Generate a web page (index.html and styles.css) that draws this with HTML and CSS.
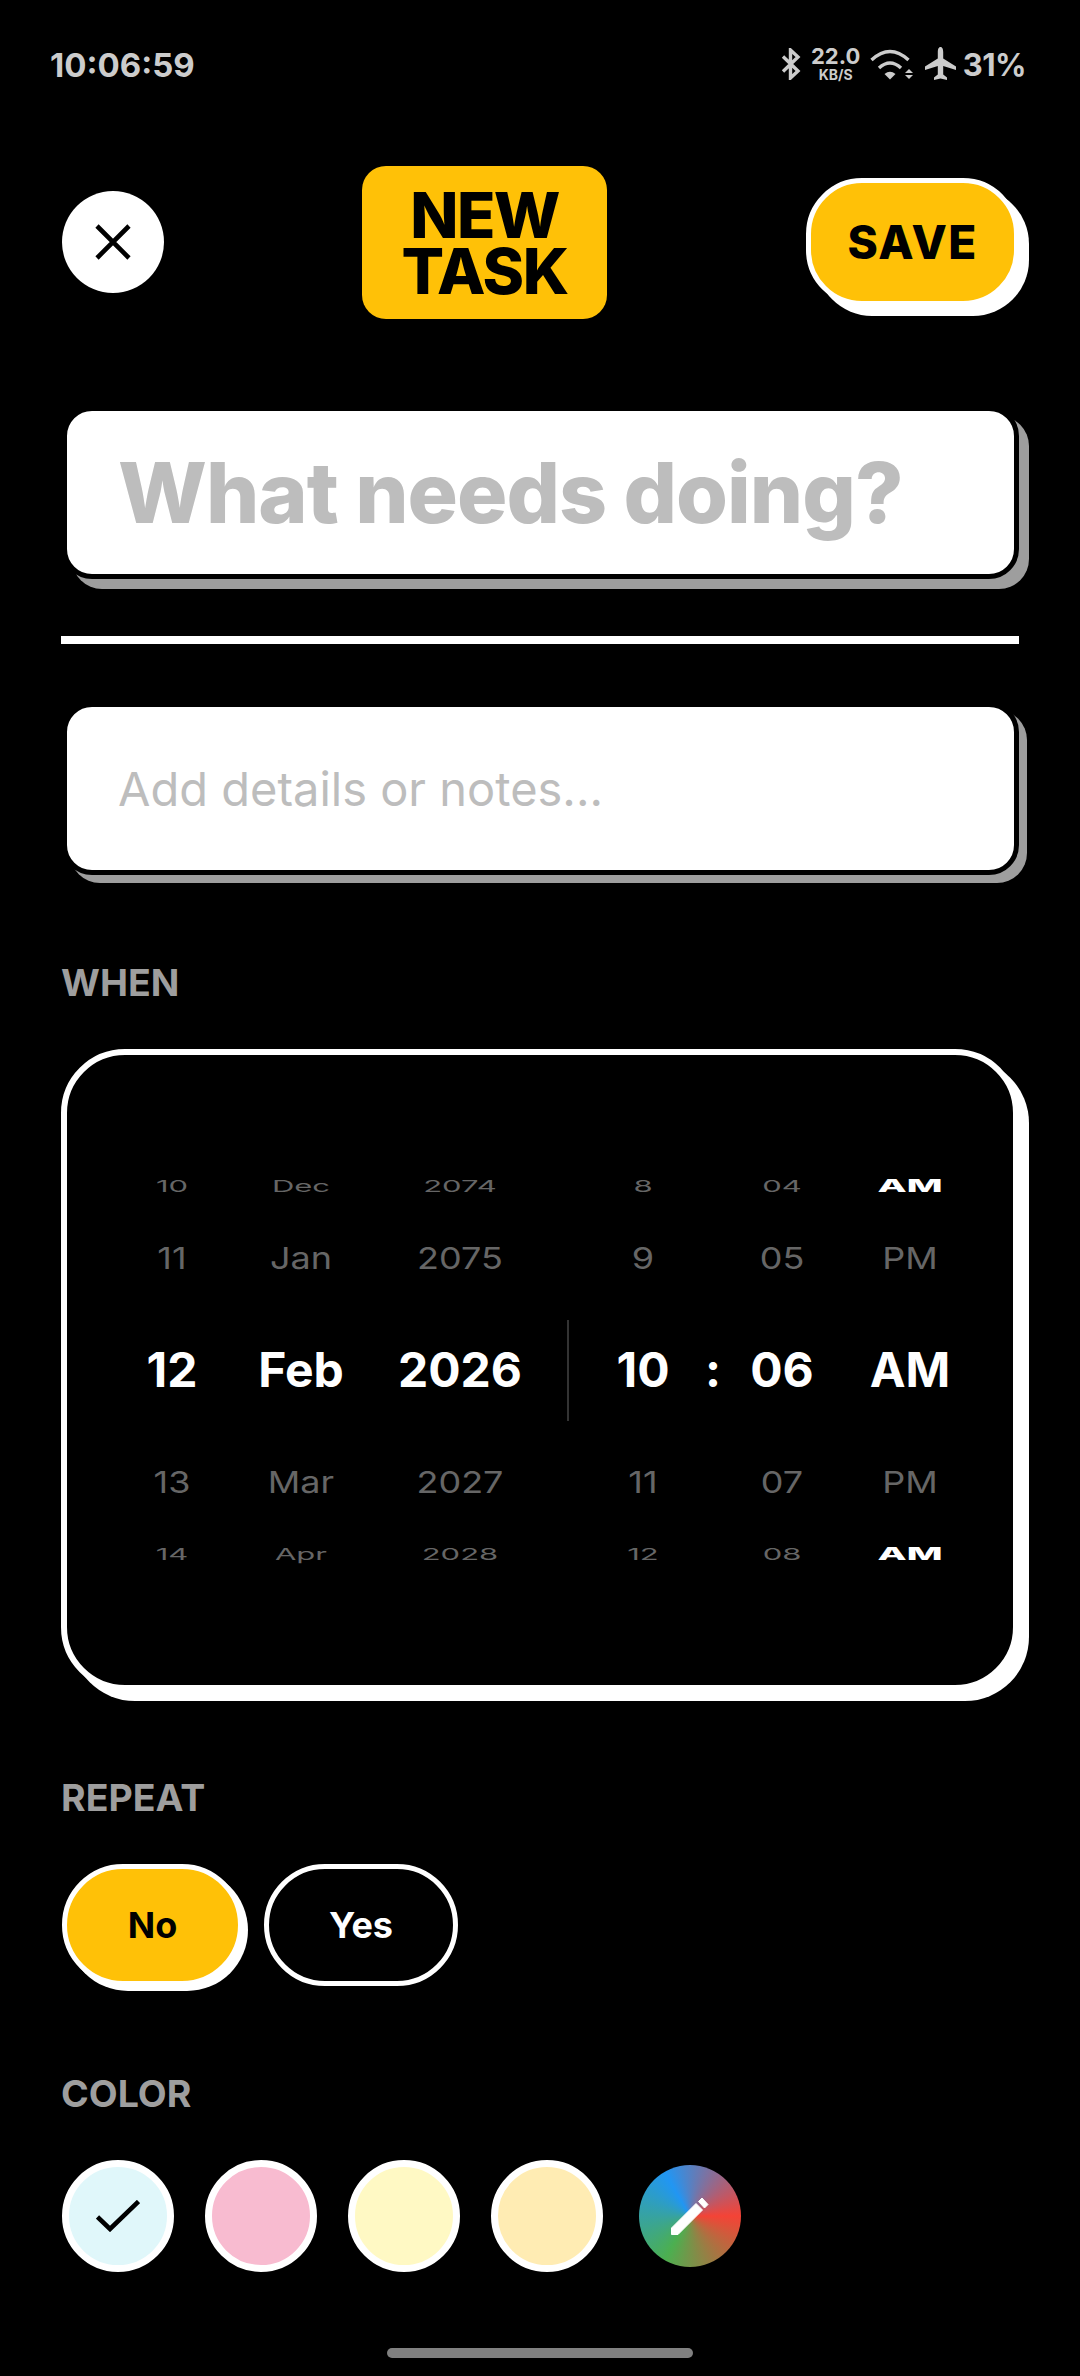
FILE: index.html
```html
<!DOCTYPE html>
<html lang="en">
<head>
    <meta charset="UTF-8">
    <title>New Task</title>
    <link rel="stylesheet" href="styles.css">
</head>
<body>
    <div class="status-bar">
        <span class="clock">10:06:59</span>
        <div class="status-icons">
            <svg class="icon-bt" viewBox="0 0 20 32"><path d="M2 8.5 L17 23 L9.5 30 V2 L17 9 L2 23.5" fill="none" stroke="#ccc" stroke-width="3.4"/></svg>
            <div class="net-speed"><span class="net-num">22.0</span><span class="net-unit">KB/S</span></div>
            <svg class="icon-wifi" viewBox="0 0 43 31">
                <path d="M1.5 11 Q20 -6 38.5 11" fill="none" stroke="#ccc" stroke-width="3.4"/>
                <path d="M9 19 Q20 9 31 19" fill="none" stroke="#ccc" stroke-width="3.4"/>
                <path d="M14.5 25 Q20 20.5 25.5 25 L20 30.5 Z" fill="#ccc"/>
                <path d="M35 24 L39 20 L43 24 Z M35 26 L43 26 L39 30 Z" fill="#ccc"/>
            </svg>
            <svg class="icon-plane" viewBox="0 0 31 35"><path d="M15.5 0 C17.5 0 18.2 2.5 18.2 5 V11.5 L31 19.5 V23 L18.2 19 V27.5 L22 30.5 V33 L15.5 31.5 L9 33 V30.5 L12.8 27.5 V19 L0 23 V19.5 L12.8 11.5 V5 C12.8 2.5 13.5 0 15.5 0 Z" fill="#ccc"/></svg>
            <span class="battery">31%</span>
        </div>
    </div>

    <div class="page">
        <header class="top-bar">
            <button class="close-btn">
                <svg viewBox="0 0 36 36"><path d="M2 2 L34 34 M34 2 L2 34" stroke="#000" stroke-width="4.6" fill="none"/></svg>
            </button>
            <h1 class="title-badge">NEW<br>TASK</h1>
            <button class="save-btn">SAVE</button>
        </header>

        <div class="field field-title">What needs doing?</div>
        <div class="divider"></div>
        <div class="field field-notes">Add details or notes...</div>

        <div class="section-label label-when">WHEN</div>
        <div class="picker-card">
            <div class="picker-row row-far">
                <span>10</span><span>Dec</span><span>2074</span><span></span>
                <span>8</span><span></span><span>04</span><span class="ampm-on">AM</span>
            </div>
            <div class="picker-row row-near">
                <span>11</span><span>Jan</span><span>2075</span><span></span>
                <span>9</span><span></span><span>05</span><span>PM</span>
            </div>
            <div class="picker-row row-current">
                <span>12</span><span>Feb</span><span>2026</span><span class="sep-cell"><i class="sep-line"></i></span>
                <span>10</span><span>:</span><span>06</span><span>AM</span>
            </div>
            <div class="picker-row row-near">
                <span>13</span><span>Mar</span><span>2027</span><span></span>
                <span>11</span><span></span><span>07</span><span>PM</span>
            </div>
            <div class="picker-row row-far">
                <span>14</span><span>Apr</span><span>2028</span><span></span>
                <span>12</span><span></span><span>08</span><span class="ampm-on">AM</span>
            </div>
        </div>

        <div class="section-label label-repeat">REPEAT</div>
        <div class="repeat-row">
            <button class="pill pill-no">No</button>
            <button class="pill pill-yes">Yes</button>
        </div>

        <div class="section-label label-color">COLOR</div>
        <div class="swatch-row">
            <div class="swatch swatch-blue">
                <svg viewBox="0 0 44 32"><path d="M1.5 17 L14 29 L42.5 1.5" fill="none" stroke="#000" stroke-width="4.6"/></svg>
            </div>
            <div class="swatch swatch-pink"></div>
            <div class="swatch swatch-yellow"></div>
            <div class="swatch swatch-orange"></div>
            <div class="swatch-custom">
                <svg viewBox="0 0 38 38"><path d="M0.5 31 V37.5 H7 L31.5 13 L25 6.5 Z M27.5 4.5 L31 1 L37 7.5 L33.5 11 Z" fill="#fff" stroke="#fff" stroke-width="1" stroke-linejoin="round"/></svg>
            </div>
        </div>
    </div>

    <div class="home-bar"></div>
</body>
</html>
```

FILE: styles.css
```css
* {
    box-sizing: border-box;
}
html, body {
    margin: 0;
    padding: 0;
}
body {
    width: 1080px;
    height: 2376px;
    background: #000;
    color: #fff;
    font-family: Inter, "Liberation Sans", sans-serif;
    overflow: hidden;
}
button {
    font-family: inherit;
    padding: 0;
    cursor: pointer;
}

/* status bar */
.status-bar {
    height: 128px;
    padding: 45px 54px 0 50px;
    display: flex;
    justify-content: space-between;
    align-items: flex-start;
    color: #ccc;
}
.clock {
    font-size: 33px;
    font-weight: 700;
    line-height: 40px;
}
.status-icons {
    display: flex;
    align-items: flex-start;
}
.icon-bt {
    width: 20px;
    height: 32px;
    margin-top: 3px;
}
.net-speed {
    display: flex;
    flex-direction: column;
    align-items: center;
    width: 48px;
    margin-left: 11px;
    font-weight: 700;
}
.net-num {
    font-size: 22px;
    line-height: 22px;
}
.net-unit {
    font-size: 14px;
    line-height: 15px;
}
.icon-wifi {
    width: 43px;
    height: 31px;
    margin: 4px 0 0 10px;
}
.icon-plane {
    width: 31px;
    height: 35px;
    margin: 2px 0 0 12px;
}
.battery {
    font-size: 31px;
    font-weight: 700;
    line-height: 40px;
    margin-left: 7px;
    letter-spacing: -0.5px;
}

/* page */
.page {
    padding: 0 61px;
}
.top-bar {
    height: 153px;
    margin-top: 38px;
    display: flex;
    align-items: flex-start;
}
.close-btn {
    width: 102px;
    height: 102px;
    margin: 25px 0 0 1px;
    border: none;
    border-radius: 50%;
    background: #fff;
    display: flex;
    align-items: center;
    justify-content: center;
}
.close-btn svg {
    width: 36px;
    height: 36px;
}
.title-badge {
    width: 246px;
    height: 153px;
    margin: 0 0 0 198px;
    border-radius: 24px;
    background: #ffc107;
    color: #000;
    font-size: 63px;
    font-weight: 800;
    line-height: 56px;
    letter-spacing: -1.5px;
    text-align: center;
    display: flex;
    align-items: center;
    justify-content: center;
}
.save-btn {
    width: 213px;
    height: 128px;
    margin: 12px 0 0 199px;
    border: 5px solid #fff;
    border-radius: 56px;
    background: #ffc107;
    box-shadow: 10px 10px 0 #fff;
    color: #000;
    font-size: 46px;
    font-weight: 800;
    letter-spacing: 1.5px;
}

/* inputs */
.field {
    width: 957px;
    height: 173px;
    margin-left: 1px;
    padding-left: 51px;
    border: 5px solid #000;
    border-radius: 30px;
    background: #fff;
    display: flex;
    align-items: center;
    color: #bdbdbd;
}
.field-title {
    margin-top: 87px;
    box-shadow: 10px 10px 0 #9e9e9e;
    font-size: 84px;
    font-weight: 800;
    letter-spacing: -1px;
}
.divider {
    height: 8px;
    margin-top: 57px;
    background: #fff;
}
.field-notes {
    margin-top: 58px;
    box-shadow: 8px 8px 0 #9e9e9e;
    font-size: 47px;
    font-weight: 400;
}

/* section labels */
.section-label {
    color: #9e9e9e;
    font-size: 37.5px;
    font-weight: 700;
    line-height: 44px;
}
.label-when {
    margin-top: 86px;
}
.label-repeat {
    margin-top: 85px;
}
.label-color {
    margin-top: 86px;
}

/* date and time wheel */
.picker-card {
    width: 958px;
    height: 642px;
    margin-top: 44px;
    border: 6px solid #fff;
    border-radius: 64px;
    background: #000;
    box-shadow: 10px 10px 0 #fff;
    padding-top: 95px;
}
.picker-row {
    display: grid;
    grid-template-columns: 128px 130px 188px 28px 122px 18px 120px 136px;
    padding-left: 41px;
    text-align: center;
    color: #666;
}
.row-far {
    height: 72px;
    line-height: 72px;
    font-size: 31px;
}
.row-far span {
    transform: scaleY(0.53);
}
.row-far .ampm-on {
    color: #fff;
    font-weight: 800;
    font-size: 38px;
    transform: scaleY(0.45);
}
.row-near {
    height: 72px;
    line-height: 72px;
    font-size: 36px;
}
.row-near span {
    transform: scaleY(0.83);
}
.row-current {
    height: 152px;
    line-height: 152px;
    color: #fff;
    font-size: 48px;
    font-weight: 700;
}
.sep-cell {
    display: flex;
    justify-content: center;
    align-items: center;
}
.sep-line {
    width: 2px;
    height: 101px;
    background: #333;
}

/* repeat */
.repeat-row {
    display: flex;
    gap: 21px;
    margin-top: 44px;
    padding-left: 1px;
}
.pill {
    height: 122px;
    border: 5px solid #fff;
    border-radius: 61px;
    font-size: 36px;
    font-weight: 700;
}
.pill-no {
    width: 181px;
    background: #ffc107;
    box-shadow: 5px 5px 0 #fff;
    color: #000;
}
.pill-yes {
    width: 194px;
    background: #000;
    color: #fff;
}

/* colours */
.swatch-row {
    display: flex;
    align-items: center;
    margin-top: 44px;
    padding-left: 1px;
}
.swatch {
    width: 112px;
    height: 112px;
    margin-right: 31px;
    border: 7px solid #fff;
    border-radius: 50%;
    display: flex;
    align-items: center;
    justify-content: center;
}
.swatch svg {
    width: 44px;
    height: 32px;
}
.swatch-blue {
    background: #e0f7fa;
}
.swatch-pink {
    background: #f8bbd0;
}
.swatch-yellow {
    background: #fff9c4;
}
.swatch-orange {
    background: #ffecb3;
}
.swatch-custom {
    width: 102px;
    height: 102px;
    margin-left: 5px;
    border-radius: 50%;
    background: conic-gradient(from 90deg, #f44336, #4caf50 120deg, #2196f3 240deg, #f44336);
    display: flex;
    align-items: center;
    justify-content: center;
}
.swatch-custom svg {
    width: 38px;
    height: 38px;
}

.home-bar {
    position: absolute;
    left: 387px;
    top: 2348px;
    width: 306px;
    height: 10px;
    border-radius: 5px;
    background: #808080;
}
```
